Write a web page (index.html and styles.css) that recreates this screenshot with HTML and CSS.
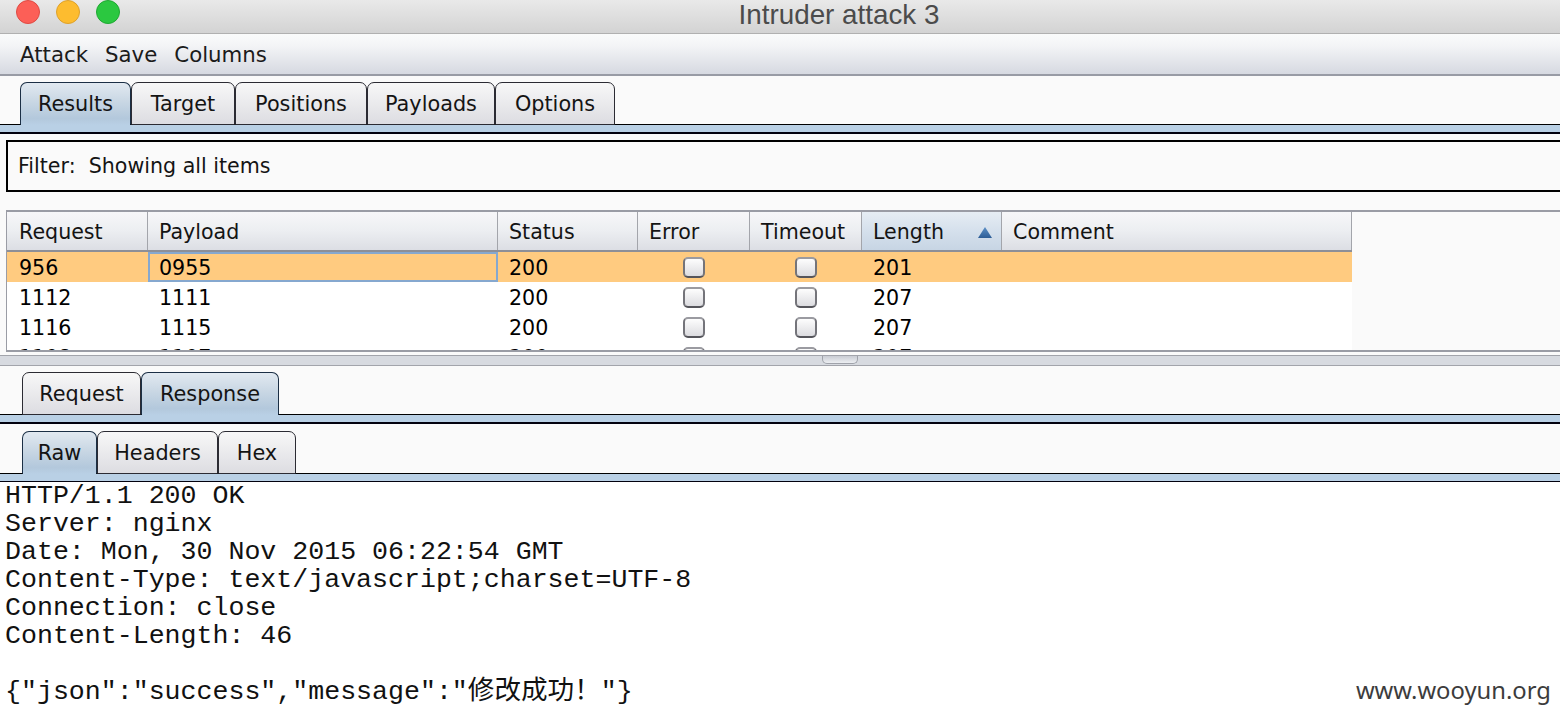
FILE: index.html
```html
<!DOCTYPE html>
<html>
<head>
<meta charset="utf-8">
<title>Intruder attack 3</title>
<link rel="stylesheet" href="styles.css">
</head>
<body>
<div class="window">
  <div class="titlebar">
    <div class="lights">
      <span class="light red"></span>
      <span class="light yellow"></span>
      <span class="light green"></span>
    </div>
    <div class="title">Intruder attack 3</div>
  </div>

  <div class="menubar">
    <span class="menu">Attack</span>
    <span class="menu">Save</span>
    <span class="menu">Columns</span>
  </div>

  <div class="tabstrip strip-main">
    <div class="tab sel w-results">Results</div>
    <div class="tab w-target">Target</div>
    <div class="tab w-positions">Positions</div>
    <div class="tab w-payloads">Payloads</div>
    <div class="tab w-options">Options</div>
  </div>
  <div class="tabband"></div>

  <div class="filter">Filter:&nbsp; Showing all items</div>

  <div class="scrollpane">
    <div class="grid header">
      <div class="th">Request</div>
      <div class="th">Payload</div>
      <div class="th">Status</div>
      <div class="th">Error</div>
      <div class="th">Timeout</div>
      <div class="th sorted">Length
        <svg class="sort" width="14" height="11" viewBox="0 0 14 11">
          <defs>
            <linearGradient id="sg" x1="0" y1="0" x2="0" y2="1">
              <stop offset="0" stop-color="#5b8fc6"/>
              <stop offset="1" stop-color="#2d5d96"/>
            </linearGradient>
          </defs>
          <path d="M7 0 L14 11 L0 11 Z" fill="url(#sg)"/>
        </svg>
      </div>
      <div class="th">Comment</div>
    </div>
    <div class="rows">
      <div class="grid row sel">
        <div class="td">956</div>
        <div class="td focus">0955</div>
        <div class="td">200</div>
        <div class="td center"><span class="cb"></span></div>
        <div class="td center"><span class="cb"></span></div>
        <div class="td">201</div>
        <div class="td"></div>
      </div>
      <div class="grid row">
        <div class="td">1112</div>
        <div class="td">1111</div>
        <div class="td">200</div>
        <div class="td center"><span class="cb"></span></div>
        <div class="td center"><span class="cb"></span></div>
        <div class="td">207</div>
        <div class="td"></div>
      </div>
      <div class="grid row">
        <div class="td">1116</div>
        <div class="td">1115</div>
        <div class="td">200</div>
        <div class="td center"><span class="cb"></span></div>
        <div class="td center"><span class="cb"></span></div>
        <div class="td">207</div>
        <div class="td"></div>
      </div>
      <div class="grid row">
        <div class="td">1108</div>
        <div class="td">1107</div>
        <div class="td">200</div>
        <div class="td center"><span class="cb"></span></div>
        <div class="td center"><span class="cb"></span></div>
        <div class="td">207</div>
        <div class="td"></div>
      </div>
    </div>
  </div>

  <div class="divider"><span class="handle"></span></div>

  <div class="tabstrip strip-sub">
    <div class="tab w-request">Request</div>
    <div class="tab sel w-response">Response</div>
  </div>
  <div class="tabband"></div>

  <div class="tabstrip strip-view">
    <div class="tab sel w-raw">Raw</div>
    <div class="tab w-headers">Headers</div>
    <div class="tab w-hex">Hex</div>
  </div>
  <div class="tabband"></div>

<pre class="raw">HTTP/1.1 200 OK
Server: nginx
Date: Mon, 30 Nov 2015 06:22:54 GMT
Content-Type: text/javascript;charset=UTF-8
Connection: close
Content-Length: 46

{"json":"success","message":"修改成功！"}</pre>

  <div class="watermark">www.wooyun.org</div>
</div>
</body>
</html>
```

FILE: styles.css
```css
html, body {
  margin: 0;
  padding: 0;
  overflow: hidden;
}
body {
  width: 1560px;
  height: 718px;
  background: #fafafa;
  font-family: "DejaVu Sans", "Noto Sans", sans-serif;
  color: #141414;
}
.window {
  position: relative;
  width: 1560px;
  height: 718px;
  overflow: hidden;
  background: #fafafa;
}

/* title bar */
.titlebar {
  display: flex;
  height: 34px;
  box-sizing: border-box;
  background: linear-gradient(#e9e9e9, #d3d3d3);
  border-bottom: 1px solid #b0b0b0;
}
.lights {
  width: 120px;
  display: flex;
  gap: 16px;
  padding: 0 0 0 16px;
  box-sizing: border-box;
  align-items: flex-start;
}
.light {
  width: 24px;
  height: 24px;
  border-radius: 50%;
  box-sizing: border-box;
}
.red { background: #fc5f57; border: 1px solid #df4a43; }
.yellow { background: #fdbc2f; border: 1px solid #dea12a; }
.green { background: #2bc840; border: 1px solid #1fa832; }
.title {
  flex: 1;
  text-align: center;
  font-family: "Liberation Sans", Arial, sans-serif;
  font-size: 27.8px;
  line-height: 29px;
  color: #4b4b4b;
  padding-right: 2px;
}

/* menu bar */
.menubar {
  display: flex;
  gap: 17px;
  height: 42px;
  box-sizing: border-box;
  padding-left: 20px;
  align-items: center;
  background: linear-gradient(#fafbfb 0%, #f3f4f6 30%, #d6d9e1 100%);
  border-bottom: 2px solid #989ba5;
  font-size: 21.3px;
  color: #1b1b1b;
}

/* tabs */
.tabstrip {
  display: flex;
  align-items: flex-end;
  border-bottom: 1px solid #000;
}
.strip-main { padding: 6px 0 0 20px; }
.strip-sub { padding: 6px 0 0 22px; }
.strip-view { padding: 7px 0 0 22px; }
.tab {
  height: 43px;
  margin-bottom: -1px;
  box-sizing: border-box;
  border: 1px solid #2b2b33;
  border-radius: 7px 7px 0 0;
  background: linear-gradient(#f8f8f8, #dcdce1);
  background-origin: border-box;
  display: flex;
  align-items: center;
  justify-content: center;
  font-size: 20.8px;
  color: #141414;
  padding-top: 1px;
}
.tab.sel {
  border-color: #1b2f45;
  border-bottom-color: transparent;
  background: linear-gradient(#e3eaf1 0%, #c9d7e4 45%, #b3c8dc 85%, #b9d0e5 100%);
  background-origin: border-box;
}
.w-results { width: 111px; }
.w-target { width: 104px; }
.w-positions { width: 132px; }
.w-payloads { width: 128px; }
.w-options { width: 120px; }
.w-request { width: 119px; }
.w-response { width: 138px; }
.w-raw { width: 75px; }
.w-headers { width: 121px; }
.w-hex { width: 78px; }

.tabband {
  height: 7px;
  background: #b9d0e5;
  border-bottom: 2px solid #02010e;
}

/* filter */
.filter {
  margin: 6px 0 0 6px;
  height: 52px;
  box-sizing: border-box;
  border: 2px solid #000;
  border-right: none;
  padding-left: 10px;
  display: flex;
  align-items: center;
  font-size: 20.6px;
  color: #141414;
  background: #fafafa;
}

/* table */
.scrollpane {
  margin: 18px 0 0 6px;
  border-top: 2px solid #9a9ca5;
  border-left: 1px solid #9a9ca5;
  border-bottom: 2px solid #9a9ca5;
  background: #fafafa;
}
.grid {
  display: grid;
  grid-template-columns: 141px 350px 140px 112px 112px 140px 350px;
  width: 1345px;
}
.header {
  height: 40px;
  box-sizing: border-box;
  border-bottom: 2px solid #8d8f97;
}
.th {
  background: linear-gradient(#f7f7f9 0%, #eceef1 50%, #dcdee4 100%);
  border-right: 1px solid #a3a5ab;
  padding-left: 11px;
  padding-top: 1px;
  display: flex;
  align-items: center;
  font-size: 20.6px;
  color: #141414;
}
.th:first-child { padding-left: 12px; }
.th.sorted {
  background: linear-gradient(#e6edf4 0%, #d5e0ec 50%, #c7d5e4 100%);
}
.sort {
  margin-left: auto;
  margin-right: 9px;
  margin-top: 1px;
}
.rows {
  height: 98px;
  overflow: hidden;
}
.row {
  height: 30px;
  background: #fff;
}
.row.sel { background: #ffcb80; }
.td {
  padding-left: 11px;
  padding-top: 1px;
  display: flex;
  align-items: center;
  font-size: 20.6px;
  color: #000;
  box-sizing: border-box;
  height: 30px;
}
.td:first-child { padding-left: 12px; }
.td.focus {
  border: 2px solid #86a8cf;
  padding-left: 9px;
  padding-top: 1px;
  height: 30px;
}
.td.center {
  justify-content: center;
  padding-left: 0;
}
.cb {
  display: block;
  width: 22px;
  height: 21px;
  box-sizing: border-box;
  border-radius: 5px;
  border: 2px solid #74747a;
  border-top-color: #9b9ba1;
  border-bottom-color: #55555b;
  background: linear-gradient(#fdfdfd, #dcdce0);
}

/* split divider */
.divider {
  margin-top: 3px;
  height: 11px;
  box-sizing: border-box;
  border-top: 1px solid #a2a4ab;
  border-bottom: 1px solid #a2a4ab;
  background: #d7dae0;
  display: flex;
  justify-content: center;
}
.handle {
  display: block;
  width: 36px;
  height: 8px;
  margin-left: 120px;
  box-sizing: border-box;
  border: 1px solid #9fa2aa;
  border-top: none;
  border-radius: 0 0 5px 5px;
  background: linear-gradient(#c9ccd3, #eceef2);
}

/* raw response */
.raw {
  margin: 0;
  padding: 0 0 0 5px;
  background: #fff;
  height: 240px;
  font-family: "Liberation Mono", "Noto Sans CJK SC", monospace;
  font-size: 26.6px;
  line-height: 28px;
  color: #111;
  margin-top: -1px;
}

.watermark {
  position: absolute;
  right: 9px;
  top: 674px;
  font-family: "Noto Sans", "Open Sans", sans-serif;
  font-size: 23.8px;
  line-height: 32px;
  color: #3c3c3c;
}
```
